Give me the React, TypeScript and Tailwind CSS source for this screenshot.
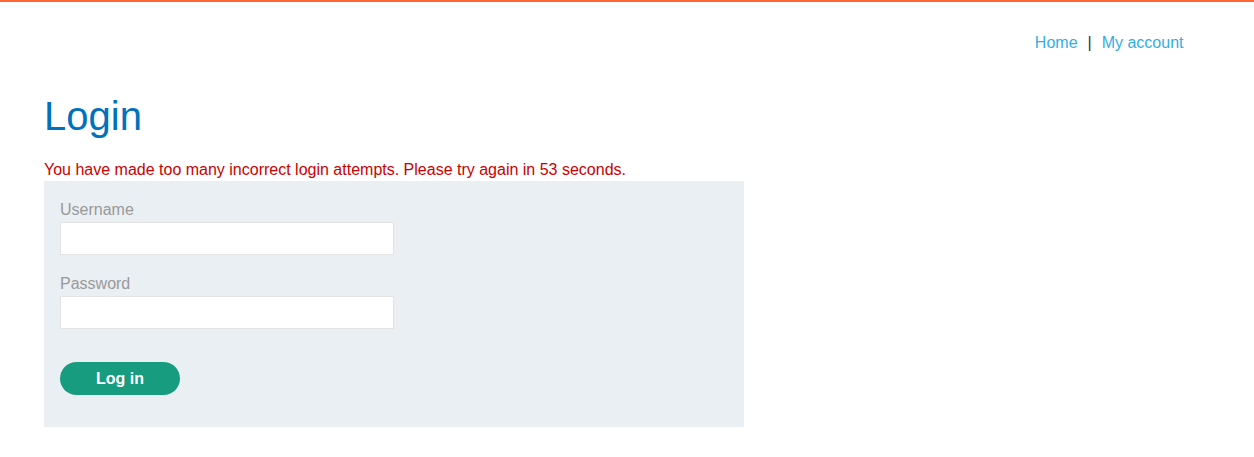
import React from "react";

export default function App() {
  return (
    <div
      className="min-h-[457px] bg-white border-t-2 border-[#ff6633]"
      style={{ fontFamily: '"Liberation Sans", Arial, sans-serif' }}
    >
      <header className="flex justify-end pt-[32px] pr-[70.5px] text-[16px] leading-[18px]">
        <a href="#" className="text-[#33aee3]">Home</a>
        <span className="mx-[10px] text-[#333333]">|</span>
        <a href="#" className="text-[#33aee3]">My account</a>
      </header>
      <main className="pl-[44px]">
        <h1 className="mt-[41px] text-[40px] leading-[46px] text-[#0071bc] font-normal">Login</h1>
        <p className="mt-[22px] text-[16px] leading-[18px] text-[#cc0000]">
          You have made too many incorrect login attempts. Please try again in 53 seconds.
        </p>
        <form
          className="mt-[2px] w-[700px] bg-[#e9eff2] px-[16px] pt-[20px] pb-[32px] flex flex-col items-start"
          onSubmit={(e) => e.preventDefault()}
        >
          <label className="text-[16px] leading-[18px] text-[#999999]">Username</label>
          <input
            type="text"
            className="mt-[3px] w-[334px] h-[33px] bg-white border border-[#e3e3e3] outline-none px-2"
          />
          <label className="mt-[20px] text-[16px] leading-[18px] text-[#999999]">Password</label>
          <input
            type="password"
            className="mt-[3px] w-[334px] h-[33px] bg-white border border-[#e3e3e3] outline-none px-2"
          />
          <button
            type="submit"
            className="mt-[33px] w-[120px] h-[33px] rounded-full bg-[#189c80] text-white font-bold text-[16px] leading-[18px]"
          >
            Log in
          </button>
        </form>
      </main>
    </div>
  );
}
